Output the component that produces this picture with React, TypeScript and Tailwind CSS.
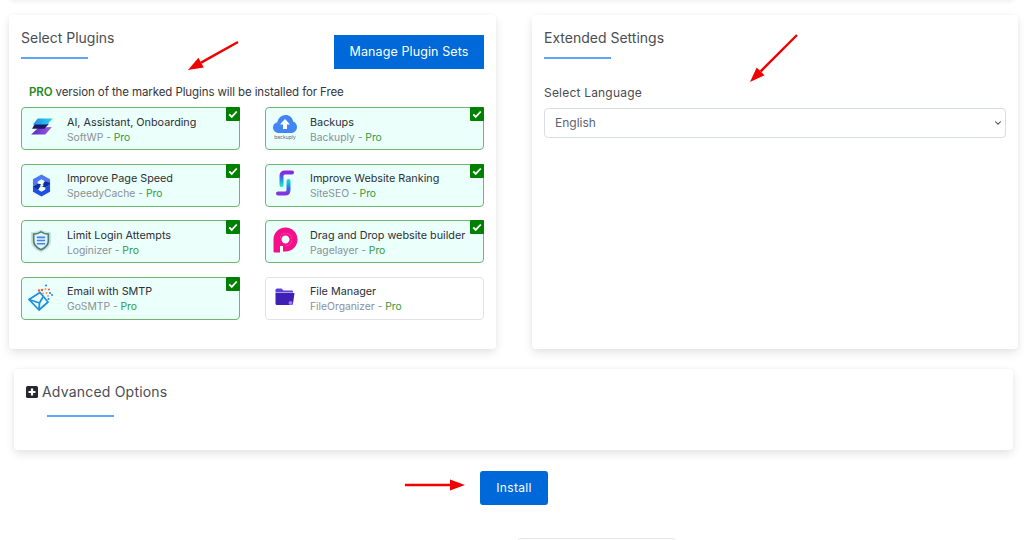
import React from "react";
import { ChevronDown } from "lucide-react";

const font = { fontFamily: '"Inter", "Liberation Sans", sans-serif' };

function SoftWP() {
  return (
    <svg viewBox="0 0 24 18" className="w-[23px] h-[17px] mb-[5px]">
      <defs>
        <linearGradient id="sw1" x1="0" y1="0" x2="1" y2="0">
          <stop offset="0" stopColor="#1a8fe8" />
          <stop offset="1" stopColor="#30d4ea" />
        </linearGradient>
        <linearGradient id="sw2" x1="0" y1="0" x2="1" y2="0">
          <stop offset="0" stopColor="#5a26c0" />
          <stop offset="1" stopColor="#9a5fe8" />
        </linearGradient>
      </defs>
      <path d="M9 10 L23 9.5 L16 17.5 L1 17.5 Z" fill="url(#sw2)" />
      <path d="M5 6 L20 6 L15 11.5 L2 11.5 Z" fill="#1c1668" />
      <path d="M8 0.5 L24 0.5 L18 7 L3 7 Z" fill="url(#sw1)" />
    </svg>
  );
}

function SpeedyCache() {
  return (
    <svg viewBox="0 0 20 24" className="w-[19px] h-[23px]">
      <path d="M10 0.5 L19 5.5 L19 9 L13.5 12 L13.5 7.5 L10 5.5 L6 7.8 L6 10 L1 13 L1 5.5 Z" fill="#4d78f2" />
      <path d="M1 13 L1 18.5 L10 23.5 L19 18.5 L19 11 L14 14 L14 16.2 L10 18.5 L6.5 16.5 L6.5 12 Z" fill="#1f4fe0" />
      <path d="M6 10 L1 13 L6.5 16.5 L10 11 Z" fill="#0f2f9e" />
      <path d="M13.5 7.5 L10 13 L14 14 L19 11 L19 9 Z" fill="#0f2f9e" />
      <path d="M11 8.5 L8.5 12.5 L11 12.5 L9 16 L12.5 11.2 L10.5 11 Z" fill="#ebfffb" />
    </svg>
  );
}

function Loginizer() {
  return (
    <svg viewBox="0 0 24 26" className="w-[22px] h-[24px] mb-[1px]">
      <path d="M12 0.5 C15 2.5 19 3.5 23 3.5 L23 13 C23 19 18 23 12 25.5 C6 23 1 19 1 13 L1 3.5 C5 3.5 9 2.5 12 0.5 Z" fill="#d5dedd" />
      <path d="M12 3 C14.5 4.5 17.5 5.5 20 5.5 L20 13 C20 17.5 16.5 20.5 12 22.5 C7.5 20.5 4 17.5 4 13 L4 5.5 C6.5 5.5 9.5 4.5 12 3 Z" fill="#e4f0fb" stroke="#3f8478" strokeWidth="1.8" />
      <path d="M7.5 9 H16.5 M7.5 12.5 H16.5 M7.5 16 H16.5" stroke="#3f86ea" strokeWidth="1.8" />
    </svg>
  );
}

function GoSMTP() {
  return (
    <svg viewBox="0 0 26 27" className="w-[26px] h-[27px] mb-[2px]">
      <path d="M1 15.5 L12 8.5 L20 18 L11 26 Z" fill="none" stroke="#1f8fe0" strokeWidth="1.8" strokeLinejoin="round" />
      <path d="M1 15.5 L11.5 19 L15 13 M11.5 19 L11 25.5" fill="none" stroke="#1f8fe0" strokeWidth="1.8" />
      <circle cx="18" cy="1.5" r="1.1" fill="#1f8fe0" />
      <circle cx="14" cy="6" r="1.2" fill="#f0524a" />
      <circle cx="11" cy="6.5" r="1.2" fill="#f0524a" />
      <circle cx="17.5" cy="5" r="1.1" fill="#f59a6a" />
      <circle cx="21" cy="5.5" r="1" fill="#f0524a" />
      <circle cx="15" cy="9.5" r="1.1" fill="#f59a6a" />
      <circle cx="18.5" cy="9" r="1.1" fill="#f59a6a" />
      <circle cx="22" cy="9" r="1.1" fill="#1f8fe0" />
      <circle cx="20" cy="12" r="1.1" fill="#f59a6a" />
      <circle cx="24" cy="11" r="1" fill="#1f8fe0" />
      <circle cx="20.5" cy="15" r="1.1" fill="#1f8fe0" />
    </svg>
  );
}

function Backuply() {
  return (
    <div className="flex flex-col items-center mb-[2px]">
      <svg viewBox="0 0 24 18" className="w-[24px] h-[18px]">
        <path d="M6 18 C2.5 18 0 15.5 0 12.5 C0 9.8 1.8 7.8 4.3 7.2 C5.2 3 8.5 0 12.6 0 C16.5 0 19.4 2.6 20.2 6.4 C22.5 7.2 24 9.4 24 12 C24 15.4 21.5 18 18 18 Z" fill="#4285f4" />
        <path d="M12 4 L17 9.5 L14 9.5 L14 14 L10 14 L10 9.5 L7 9.5 Z" fill="#ffffff" />
      </svg>
      <span className="text-[5px] leading-[7px] mt-[1px] text-[#5b6472]">backuply</span>
    </div>
  );
}

function SiteSEO() {
  return (
    <svg viewBox="0 0 18 26" className="w-[18px] h-[26px] mb-[5px]">
      <defs>
        <linearGradient id="ss1" x1="0" y1="0" x2="0" y2="1">
          <stop offset="0" stopColor="#8a26e0" />
          <stop offset="0.5" stopColor="#2e7ce8" />
          <stop offset="1" stopColor="#12e0c8" />
        </linearGradient>
        <linearGradient id="ss2" x1="0" y1="0" x2="0" y2="1">
          <stop offset="0" stopColor="#12d8d8" />
          <stop offset="0.6" stopColor="#2a70e8" />
          <stop offset="1" stopColor="#8a30e0" />
        </linearGradient>
      </defs>
      <path d="M16 2.5 H9 Q5.5 2.5 5.5 6 V15" fill="none" stroke="url(#ss1)" strokeWidth="4" strokeLinecap="round" />
      <path d="M12.5 11 V20 Q12.5 23.5 9 23.5 H2" fill="none" stroke="url(#ss2)" strokeWidth="4" strokeLinecap="round" />
    </svg>
  );
}

function Pagelayer() {
  return (
    <svg viewBox="0 0 25 26" className="w-[25px] h-[26px] mb-[3px]">
      <path
        fillRule="evenodd"
        d="M12.5 0.5 C19.2 0.5 24.5 5.8 24.5 12.5 C24.5 19.2 19.2 24.5 12.5 24.5 L10 24.5 L10 18.6 C10.8 18.9 11.6 19 12.5 19 C16 19 19 16 19 12.5 C19 9 16 6 12.5 6 C9 6 7 9 7 12.5 L7 25.5 L2 25.5 C1 25.5 0.5 25 0.5 24 L0.5 12.5 C0.5 5.8 5.8 0.5 12.5 0.5 Z"
        fill="#f50f8b"
      />
      <path
        fillRule="evenodd"
        d="M12.5 6 C16 6 19 9 19 12.5 C19 16 16 19 12.5 19 L7 19 L7 12.5 C7 9 9 6 12.5 6 Z M12.5 8.5 C10.3 8.5 8.5 10.3 8.5 12.5 C8.5 14.7 10.3 16.5 12.5 16.5 C14.7 16.5 16.5 14.7 16.5 12.5 C16.5 10.3 14.7 8.5 12.5 8.5 Z"
        fill="#f50f8b"
      />
    </svg>
  );
}

function FileOrganizer() {
  return (
    <svg viewBox="0 0 20 18" className="w-[20px] h-[18px] mb-[3px]">
      <path d="M0.5 2 Q0.5 0.5 2 0.5 L6.5 0.5 L8.5 2.5 L17 2.5 Q18 2.5 18 3.5 L18 4.5 L0.5 4.5 Z" fill="#5a3fd8" />
      <path d="M0.5 5 L19.5 5 L18 15.5 Q17.8 17 16.5 17 L2 17 Q0.5 17 0.5 15.5 Z" fill="#3f1fb4" />
      <circle cx="15.5" cy="15" r="2" fill="#8f7cf0" />
    </svg>
  );
}

function Check() {
  return (
    <div className="absolute right-[-1px] top-[-1px] w-[14px] h-[14px] bg-[#008000] flex items-center justify-center rounded-[1px]">
      <svg viewBox="0 0 12 12" className="w-[10px] h-[10px]">
        <path d="M1.5 6.5 L4.5 9.5 L10.5 3" fill="none" stroke="#ffffff" strokeWidth="2.2" />
      </svg>
    </div>
  );
}

function Plugin({
  icon,
  title,
  sub,
  checked = true,
  right = false,
}: {
  icon: React.ReactNode;
  title: string;
  sub: string;
  checked?: boolean;
  right?: boolean;
}) {
  return (
    <div
      className={
        checked
          ? "relative h-[43px] flex items-center rounded-[4px] border border-[#6cb870] bg-[#ebfffb]"
          : "relative h-[43px] flex items-center rounded-[4px] border border-[#dfe2e6] bg-white"
      }
    >
      <div className={right ? "w-[38px] mr-[6px] shrink-0 flex justify-center" : "w-[38px] mr-[7px] shrink-0 flex justify-center"}>{icon}</div>
      <div className="flex flex-col pt-[2px]">
        <span className="text-[10.8px] leading-[15px] text-[#2b2f36] whitespace-nowrap">{title}</span>
        <span className="text-[10.3px] leading-[15px] text-[#8a9099] whitespace-nowrap">
          {sub} - <span className="text-[#2e9a3c]">Pro</span>
        </span>
      </div>
      {checked && <Check />}
    </div>
  );
}

function Heading({ children }: { children: React.ReactNode }) {
  return (
    <div>
      <h2 className="text-[14px] leading-[22px] text-[#4a4d52] font-normal">{children}</h2>
      <div className="mt-[8px] w-[67px] h-[2px] bg-[#60a5fa]" />
    </div>
  );
}

function Arrow({ className, x1, y1, x2, y2 }: { className: string; x1: number; y1: number; x2: number; y2: number }) {
  const a = Math.atan2(y2 - y1, x2 - x1);
  const l = 15;
  const w = 5.5;
  const bx = x2 - l * Math.cos(a);
  const by = y2 - l * Math.sin(a);
  const px = -Math.sin(a) * w;
  const py = Math.cos(a) * w;
  return (
    <svg className={className} viewBox="0 0 1024 540" width="1024" height="540">
      <line x1={x1} y1={y1} x2={bx} y2={by} stroke="#f00000" strokeWidth="2.4" />
      <polygon points={`${x2},${y2} ${bx + px},${by + py} ${bx - px},${by - py}`} fill="#f00000" />
    </svg>
  );
}

export default function App() {
  return (
    <div style={font} className="relative w-[1024px] h-[540px] overflow-hidden bg-white">
      <div className="flex gap-[36px] pl-[9px] pr-[6px] pt-[15px]">
        <section className="w-[487px] h-[334px] rounded-[4px] bg-white shadow-[0_4px_10px_rgba(0,0,0,0.1),0_0_4px_rgba(0,0,0,0.03)] px-[12px] pt-[12px]">
          <div className="flex justify-between">
            <Heading>Select Plugins</Heading>
            <button className="mt-[8px] w-[150px] h-[34px] bg-[#0069d9] text-white text-[12.5px] tracking-[0.1px]">
              Manage Plugin Sets
            </button>
          </div>
          <p className="mt-[14px] ml-[8px] text-[11.5px] leading-[18px] tracking-[-0.1px] text-[#33363b]">
            <b className="font-semibold text-[#1f8a1f]">PRO</b> version of the marked Plugins will be installed for Free
          </p>
          <div className="mt-[6px] grid grid-cols-2 gap-x-[25px] gap-y-[13.5px]">
            <Plugin icon={<SoftWP />} title="AI, Assistant, Onboarding" sub="SoftWP" />
            <Plugin right icon={<Backuply />} title="Backups" sub="Backuply" />
            <Plugin icon={<SpeedyCache />} title="Improve Page Speed" sub="SpeedyCache" />
            <Plugin right icon={<SiteSEO />} title="Improve Website Ranking" sub="SiteSEO" />
            <Plugin icon={<Loginizer />} title="Limit Login Attempts" sub="Loginizer" />
            <Plugin right icon={<Pagelayer />} title="Drag and Drop website builder" sub="Pagelayer" />
            <Plugin icon={<GoSMTP />} title="Email with SMTP" sub="GoSMTP" />
            <Plugin right icon={<FileOrganizer />} title="File Manager" sub="FileOrganizer" checked={false} />
          </div>
        </section>
        <section className="w-[486px] h-[334px] rounded-[4px] bg-white shadow-[0_4px_10px_rgba(0,0,0,0.1),0_0_4px_rgba(0,0,0,0.03)] px-[12px] pt-[12px]">
          <Heading>Extended Settings</Heading>
          <label className="block mt-[25px] text-[12px] leading-[18px] tracking-[0.2px] text-[#4a4d52]">Select Language</label>
          <div className="relative mt-[6px]">
            <select className="appearance-none w-full h-[30px] rounded-[4px] border border-[#d8dce4] bg-white pl-[10px] text-[12px] text-[#5b6472]">
              <option>English</option>
            </select>
            <ChevronDown size={10} strokeWidth={2.5} className="absolute right-[3px] top-[10px] text-[#33363b]" />
          </div>
        </section>
      </div>
      <section className="mt-[20px] ml-[14px] w-[999px] h-[81px] rounded-[4px] bg-white shadow-[0_4px_10px_rgba(0,0,0,0.1),0_0_4px_rgba(0,0,0,0.03)] pl-[12px] pt-[12px]">
        <div className="flex items-center gap-[4px]">
          <svg viewBox="0 0 12 12" className="w-[12px] h-[12px]">
            <rect width="12" height="12" rx="1.5" fill="#26282c" />
            <path d="M6 2.5 V9.5 M2.5 6 H9.5" stroke="#ffffff" strokeWidth="2.2" />
          </svg>
          <span className="text-[14px] leading-[22px] tracking-[0.2px] text-[#4a4d52]">Advanced Options</span>
        </div>
        <div className="mt-[12px] ml-[21px] w-[67px] h-[2px] bg-[#60a5fa]" />
      </section>
      <div className="mt-[21px] flex justify-center pl-[4px]">
        <button className="w-[68px] h-[34px] rounded-[3px] bg-[#0069d9] text-white text-[12px] tracking-[0.3px]">Install</button>
      </div>
      <div className="absolute left-[517px] top-[538px] w-[159px] h-[10px] rounded-[4px] border border-[#e4e6ea] bg-white" />
      <div className="absolute left-[10px] right-[10px] top-[-6px] h-[6px] shadow-[0_1px_5px_rgba(0,0,0,0.08)]" />
      <Arrow className="absolute left-0 top-0" x1={238} y1={42} x2={188} y2={70} />
      <Arrow className="absolute left-0 top-0" x1={797} y1={35} x2={750} y2={82} />
      <Arrow className="absolute left-0 top-0" x1={405} y1={485} x2={465} y2={485} />
    </div>
  );
}
